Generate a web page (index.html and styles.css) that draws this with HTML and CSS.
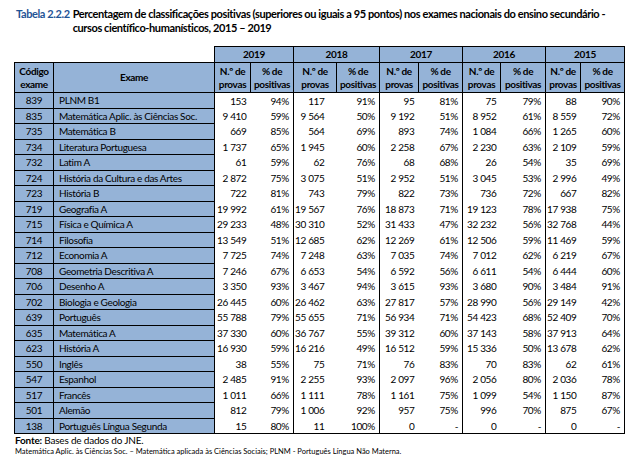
FILE: index.html
```html
<!DOCTYPE html>
<html lang="pt">
<head>
<meta charset="utf-8">
<title>Tabela 2.2.2</title>
<link rel="stylesheet" href="styles.css">
</head>
<body>
<div class="page">
  <div class="title">
    <span class="label">Tabela 2.2.2</span>
    <span class="text">Percentagem de classificações positivas (superiores ou iguais a 95 pontos) nos exames nacionais do ensino secundário -<br>cursos científico-humanísticos, 2015 – 2019</span>
  </div>
  <table class="data">
    <colgroup>
      <col class="c-code"><col class="c-name">
      <col class="c-n19"><col class="c-p19">
      <col class="c-n18"><col class="c-p18">
      <col class="c-n17"><col class="c-p17">
      <col class="c-n16"><col class="c-p16">
      <col class="c-n15"><col class="c-p15">
    </colgroup>
    <thead>
      <tr class="years">
        <td class="blank" colspan="2"></td>
        <th colspan="2">2019</th>
        <th colspan="2">2018</th>
        <th colspan="2">2017</th>
        <th colspan="2">2016</th>
        <th colspan="2">2015</th>
      </tr>
      <tr class="heads">
        <th>Código<br>exame</th>
        <th>Exame</th>
        <th>N.º de<br>provas</th><th>% de<br>positivas</th>
        <th>N.º de<br>provas</th><th>% de<br>positivas</th>
        <th>N.º de<br>provas</th><th>% de<br>positivas</th>
        <th>N.º de<br>provas</th><th>% de<br>positivas</th>
        <th>N.º de<br>provas</th><th>% de<br>positivas</th>
      </tr>
    </thead>
    <tbody>
      <tr><td class="code">839</td><td class="name">PLNM B1</td><td class="n">153</td><td class="p">94%</td><td class="n n18">117</td><td class="p">91%</td><td class="n">95</td><td class="p">81%</td><td class="n">75</td><td class="p">79%</td><td class="n">88</td><td class="p">90%</td></tr>
      <tr><td class="code">835</td><td class="name">Matemática Aplic. às Ciências Soc.</td><td class="n">9 410</td><td class="p">59%</td><td class="n n18">9 564</td><td class="p">50%</td><td class="n">9 192</td><td class="p">51%</td><td class="n">8 952</td><td class="p">61%</td><td class="n">8 559</td><td class="p">72%</td></tr>
      <tr><td class="code">735</td><td class="name">Matemática B</td><td class="n">669</td><td class="p">85%</td><td class="n n18">564</td><td class="p">69%</td><td class="n">893</td><td class="p">74%</td><td class="n">1 084</td><td class="p">66%</td><td class="n">1 265</td><td class="p">60%</td></tr>
      <tr><td class="code">734</td><td class="name">Literatura Portuguesa</td><td class="n">1 737</td><td class="p">65%</td><td class="n n18">1 945</td><td class="p">60%</td><td class="n">2 258</td><td class="p">67%</td><td class="n">2 230</td><td class="p">63%</td><td class="n">2 109</td><td class="p">59%</td></tr>
      <tr><td class="code">732</td><td class="name">Latim A</td><td class="n">61</td><td class="p">59%</td><td class="n n18">62</td><td class="p">76%</td><td class="n">68</td><td class="p">68%</td><td class="n">26</td><td class="p">54%</td><td class="n">35</td><td class="p">69%</td></tr>
      <tr><td class="code">724</td><td class="name">História da Cultura e das Artes</td><td class="n">2 872</td><td class="p">75%</td><td class="n n18">3 075</td><td class="p">51%</td><td class="n">2 952</td><td class="p">51%</td><td class="n">3 045</td><td class="p">53%</td><td class="n">2 996</td><td class="p">49%</td></tr>
      <tr><td class="code">723</td><td class="name">História B</td><td class="n">722</td><td class="p">81%</td><td class="n n18">743</td><td class="p">79%</td><td class="n">822</td><td class="p">73%</td><td class="n">736</td><td class="p">72%</td><td class="n">667</td><td class="p">82%</td></tr>
      <tr><td class="code">719</td><td class="name">Geografia A</td><td class="n">19 992</td><td class="p">61%</td><td class="n n18">19 567</td><td class="p">76%</td><td class="n">18 873</td><td class="p">71%</td><td class="n">19 123</td><td class="p">78%</td><td class="n">17 938</td><td class="p">75%</td></tr>
      <tr><td class="code">715</td><td class="name">Física e Química A</td><td class="n">29 233</td><td class="p">48%</td><td class="n n18">30 310</td><td class="p">52%</td><td class="n">31 433</td><td class="p">47%</td><td class="n">32 232</td><td class="p">56%</td><td class="n">32 768</td><td class="p">44%</td></tr>
      <tr><td class="code">714</td><td class="name">Filosofia</td><td class="n">13 549</td><td class="p">51%</td><td class="n n18">12 685</td><td class="p">62%</td><td class="n">12 269</td><td class="p">61%</td><td class="n">12 506</td><td class="p">59%</td><td class="n">11 469</td><td class="p">59%</td></tr>
      <tr><td class="code">712</td><td class="name">Economia A</td><td class="n">7 725</td><td class="p">74%</td><td class="n n18">7 248</td><td class="p">63%</td><td class="n">7 035</td><td class="p">74%</td><td class="n">7 012</td><td class="p">62%</td><td class="n">6 219</td><td class="p">67%</td></tr>
      <tr><td class="code">708</td><td class="name">Geometria Descritiva A</td><td class="n">7 246</td><td class="p">67%</td><td class="n n18">6 653</td><td class="p">54%</td><td class="n">6 592</td><td class="p">56%</td><td class="n">6 611</td><td class="p">54%</td><td class="n">6 444</td><td class="p">60%</td></tr>
      <tr><td class="code">706</td><td class="name">Desenho A</td><td class="n">3 350</td><td class="p">93%</td><td class="n n18">3 467</td><td class="p">94%</td><td class="n">3 615</td><td class="p">93%</td><td class="n">3 680</td><td class="p">90%</td><td class="n">3 484</td><td class="p">91%</td></tr>
      <tr><td class="code">702</td><td class="name">Biologia e Geologia</td><td class="n">26 445</td><td class="p">60%</td><td class="n n18">26 462</td><td class="p">63%</td><td class="n">27 817</td><td class="p">57%</td><td class="n">28 990</td><td class="p">56%</td><td class="n">29 149</td><td class="p">42%</td></tr>
      <tr><td class="code">639</td><td class="name">Português</td><td class="n">55 788</td><td class="p">79%</td><td class="n n18">55 655</td><td class="p">71%</td><td class="n">56 934</td><td class="p">71%</td><td class="n">54 423</td><td class="p">68%</td><td class="n">52 409</td><td class="p">70%</td></tr>
      <tr><td class="code">635</td><td class="name">Matemática A</td><td class="n">37 330</td><td class="p">60%</td><td class="n n18">36 767</td><td class="p">55%</td><td class="n">39 312</td><td class="p">60%</td><td class="n">37 143</td><td class="p">58%</td><td class="n">37 913</td><td class="p">64%</td></tr>
      <tr><td class="code">623</td><td class="name">História A</td><td class="n">16 930</td><td class="p">59%</td><td class="n n18">16 216</td><td class="p">49%</td><td class="n">16 512</td><td class="p">59%</td><td class="n">15 336</td><td class="p">50%</td><td class="n">13 678</td><td class="p">62%</td></tr>
      <tr><td class="code">550</td><td class="name">Inglês</td><td class="n">38</td><td class="p">55%</td><td class="n n18">75</td><td class="p">71%</td><td class="n">76</td><td class="p">83%</td><td class="n">70</td><td class="p">83%</td><td class="n">62</td><td class="p">61%</td></tr>
      <tr><td class="code">547</td><td class="name">Espanhol</td><td class="n">2 485</td><td class="p">91%</td><td class="n n18">2 255</td><td class="p">93%</td><td class="n">2 097</td><td class="p">96%</td><td class="n">2 056</td><td class="p">80%</td><td class="n">2 036</td><td class="p">78%</td></tr>
      <tr><td class="code">517</td><td class="name">Francês</td><td class="n">1 011</td><td class="p">66%</td><td class="n n18">1 111</td><td class="p">78%</td><td class="n">1 161</td><td class="p">75%</td><td class="n">1 099</td><td class="p">54%</td><td class="n">1 150</td><td class="p">87%</td></tr>
      <tr><td class="code">501</td><td class="name">Alemão</td><td class="n">812</td><td class="p">79%</td><td class="n n18">1 006</td><td class="p">92%</td><td class="n">957</td><td class="p">75%</td><td class="n">996</td><td class="p">70%</td><td class="n">875</td><td class="p">67%</td></tr>
      <tr><td class="code">138</td><td class="name">Português Língua Segunda</td><td class="n">15</td><td class="p">80%</td><td class="n n18">11</td><td class="p">100%</td><td class="n">0</td><td class="p">-</td><td class="n">0</td><td class="p">-</td><td class="n">0</td><td class="p">-</td></tr>
    </tbody>
  </table>
  <p class="source"><b>Fonte:</b> Bases de dados do JNE.</p>
  <p class="note">Matemática Aplic. às Ciências Soc. – Matemática aplicada às Ciências Sociais; PLNM - Português Língua Não Materna.</p>
</div>
</body>
</html>
```
FILE: styles.css
```css
html, body {
  margin: 0;
  padding: 0;
  background: #fff;
}

body {
  font-family: Lato, "Open Sans", sans-serif;
  color: #000;
}

.page {
  padding: 7px 0 0 14px;
}

.title {
  display: flex;
  gap: 3px;
  font-size: 11px;
  letter-spacing: -0.4px;
  font-weight: bold;
  line-height: 14px;
  margin-left: 2px;
  white-space: nowrap;
}

.title .label {
  color: #1f5496;
}

.data {
  margin-top: 11px;
  border-collapse: collapse;
  table-layout: fixed;
  width: 610px;
  font-size: 10px;
  letter-spacing: -0.35px;
}

.c-code { width: 39px; }
.c-name { width: 161px; }
.c-n19 { width: 36px; }
.c-p19 { width: 43px; }
.c-n18 { width: 43px; }
.c-p18 { width: 43px; }
.c-n17 { width: 39px; }
.c-p17 { width: 44px; }
.c-n16 { width: 38px; }
.c-p16 { width: 45px; }
.c-n15 { width: 35px; }
.c-p15 { width: 44px; }

.data th {
  background: #95b3d7;
  border: 1px solid #000;
  font-weight: bold;
  text-align: center;
  padding: 0;
  line-height: 13px;
}

.data .blank {
  background: none;
  border: none;
}

.years th {
  height: 15px;
}

.heads th {
  height: 29px;
}

.data td {
  padding: 0 4px;
  height: 14.5px;
  line-height: 14px;
  white-space: nowrap;
}

.data .code {
  background: #95b3d7;
  border: 1px solid #000;
  text-align: center;
  padding: 0;
}

.data .name {
  background: #95b3d7;
  border: 1px solid #000;
  text-align: left;
  padding-left: 5px;
}

.data .n {
  text-align: right;
  padding-right: 4px;
  padding-left: 0;
  overflow: visible;
}

.data .n18 {
  padding-right: 12px;
}

.data .p {
  text-align: right;
  border-right: 1px solid #000;
  padding-right: 4px;
}

.data tbody tr:last-child td {
  border-bottom: 1px solid #000;
}

.source {
  margin: 0 0 0 1px;
  font-size: 10px;
  letter-spacing: -0.2px;
  line-height: 13px;
}

.note {
  margin: 0 0 0 1px;
  font-size: 7.5px;
  letter-spacing: 0;
  line-height: 10px;
}
```
